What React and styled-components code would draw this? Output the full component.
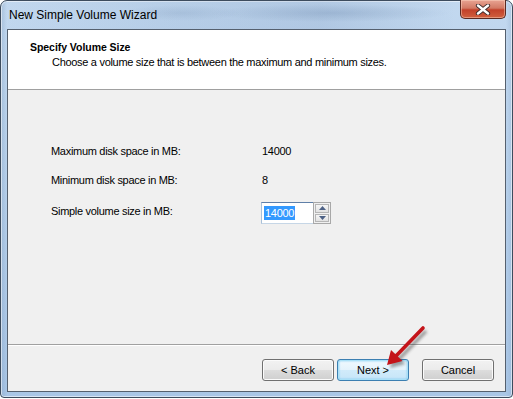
import styled, { createGlobalStyle } from 'styled-components'

const GlobalStyle = createGlobalStyle`
    html, body {
        margin: 0;
        padding: 0;
        background: #ffffff;
    }
    body {
        font-family: 'Liberation Sans', Arial, sans-serif;
        font-size: 11px;
        letter-spacing: -0.3px;
        color: #000;
    }
`

const rows = [
    { label: 'Maximum disk space in MB:', value: '14000' },
    { label: 'Minimum disk space in MB:', value: '8' },
]

export default function App() {
    return (
        <>
            <GlobalStyle />
            <Window>
                <TitleBar>
                    <Caption>New Simple Volume Wizard</Caption>
                    <CloseButton>
                        <svg width="18" height="11" viewBox="0 0 18 11">
                            <path d="M4 1.5 L14 9.5 M14 1.5 L4 9.5" stroke="#3b2a2a" strokeWidth="4.2" strokeLinecap="round" />
                            <path d="M4 1.5 L14 9.5 M14 1.5 L4 9.5" stroke="#ffffff" strokeWidth="2.4" strokeLinecap="round" />
                        </svg>
                    </CloseButton>
                </TitleBar>
                <Client>
                    <Header>
                        <Heading>Specify Volume Size</Heading>
                        <SubHeading>Choose a volume size that is between the maximum and minimum sizes.</SubHeading>
                    </Header>
                    <Body>
                        <Form>
                            {rows.map((row) => (
                                <Row key={row.label}>
                                    <Label>{row.label}</Label>
                                    <Value>{row.value}</Value>
                                </Row>
                            ))}
                            <Row>
                                <Label>Simple volume size in MB:</Label>
                                <Spin>
                                    <SpinField>
                                        <Selected>14000</Selected>
                                    </SpinField>
                                    <SpinButtons>
                                        <SpinButton>
                                            <svg width="7" height="4" viewBox="0 0 7 4"><path d="M0 4 L3.5 0 L7 4 Z" fill="#4d6185" /></svg>
                                        </SpinButton>
                                        <SpinButton>
                                            <svg width="7" height="4" viewBox="0 0 7 4"><path d="M0 0 L3.5 4 L7 0 Z" fill="#4d6185" /></svg>
                                        </SpinButton>
                                    </SpinButtons>
                                </Spin>
                            </Row>
                        </Form>
                    </Body>
                    <Footer>
                        <NavGroup>
                            <Button>&lt; Back</Button>
                            <Button primary>Next &gt;</Button>
                        </NavGroup>
                        <Button>Cancel</Button>
                    </Footer>
                </Client>
                <Arrow width="60" height="60" viewBox="0 0 60 60">
                    <defs>
                        <filter id="sh" x="-30%" y="-30%" width="160%" height="160%">
                            <feGaussianBlur stdDeviation="1.6" />
                        </filter>
                    </defs>
                    <g transform="translate(3 3)" opacity="0.45" filter="url(#sh)">
                        <path d="M46 4 L18 33" stroke="#333" strokeWidth="3.6" />
                        <path d="M10 41 L14 26 L25.5 37 Z" fill="#333" />
                    </g>
                    <path d="M46 4 L18 33" stroke="#c4141a" strokeWidth="3.6" strokeLinecap="round" />
                    <path d="M10 41 L14 26 L25.5 37 Z" fill="#c4141a" />
                </Arrow>
            </Window>
        </>
    )
}

const Window = styled.div`
    position: relative;
    box-sizing: border-box;
    width: 513px;
    height: 398px;
    display: flex;
    flex-direction: column;
    border: 1px solid #3d4c5e;
    border-radius: 7px 7px 4px 4px;
    background:
        linear-gradient(90deg, rgba(120,150,185,0.35) 0, rgba(255,255,255,0) 6px, rgba(255,255,255,0) 505px, rgba(120,150,185,0.25) 511px),
        linear-gradient(180deg, #c2d8ef 0%, #b9d2ec 40%, #a9c6e6 100%);
    box-shadow: inset 0 0 0 1px rgba(255,255,255,0.55);
`

const TitleBar = styled.div`
    height: 28px;
    display: flex;
    align-items: flex-start;
    justify-content: space-between;
    padding-left: 8px;
    background:
        radial-gradient(ellipse 120px 9px at 330px 12px, rgba(80,110,150,0.22), rgba(255,255,255,0)),
        radial-gradient(ellipse 60px 8px at 180px 12px, rgba(80,110,150,0.15), rgba(255,255,255,0)),
        linear-gradient(90deg, rgba(255,255,255,0) 0, rgba(110,140,180,0.12) 160px, rgba(90,120,165,0.16) 320px, rgba(255,255,255,0) 455px);
`

const Caption = styled.div`
    font-family: 'Liberation Sans', Arial, sans-serif;
    font-size: 12px;
    letter-spacing: 0;
    line-height: 14px;
    padding-top: 7px;
    color: #000;
`

const CloseButton = styled.div`
    width: 44px;
    height: 18px;
    margin-right: 6px;
    margin-top: -1px;
    display: flex;
    align-items: center;
    justify-content: center;
    border: 1px solid #5a2a22;
    border-top: none;
    border-radius: 0 0 5px 5px;
    background: linear-gradient(180deg, #e8a493 0%, #d27a65 45%, #c2412a 55%, #d0603f 100%);
    box-shadow: inset 0 0 0 1px rgba(255,220,200,0.45);
`

const Client = styled.div`
    flex: 1;
    display: flex;
    flex-direction: column;
    margin: 0 6px 5px 6px;
    border: 1px solid #55606e;
    background: #f0f0f0;
`

const Header = styled.div`
    height: 60px;
    box-sizing: border-box;
    padding: 11px 0 0 22px;
    background: #ffffff;
    border-bottom: 1px solid #a0a0a0;
`

const Heading = styled.div`
    font-weight: bold;
    font-size: 10.5px;
    letter-spacing: -0.05px;
    line-height: 13px;
`

const SubHeading = styled.div`
    font-size: 11px;
    line-height: 13px;
    margin: 2px 0 0 22px;
`

const Body = styled.div`
    flex: 1;
    padding: 50px 0 0 43px;
`

const Form = styled.div`
    display: flex;
    flex-direction: column;
    gap: 7px;
`

const Row = styled.div`
    display: grid;
    grid-template-columns: 210px auto;
    align-items: center;
    height: 22px;
`

const Label = styled.div`
    line-height: 13px;
`

const Value = styled.div`
    padding-left: 1px;
    line-height: 13px;
`

const Spin = styled.div`
    display: flex;
    width: 70px;
    height: 22px;
    margin-top: 4px;
`

const SpinField = styled.div`
    flex: 1;
    box-sizing: border-box;
    display: flex;
    align-items: center;
    padding-left: 2px;
    background: #ffffff;
    border: 1px solid;
    border-color: #5f7fa8 #b5cbe0 #c6d6e6 #a9c0d8;
    border-right: none;
`

const Selected = styled.span`
    background: #3399ff;
    color: #ffffff;
    line-height: 14px;
    padding: 0 1px;
`

const SpinButtons = styled.div`
    width: 18px;
    box-sizing: border-box;
    display: flex;
    flex-direction: column;
    gap: 1px;
    padding: 1px;
    border: 1px solid #a8a8a8;
    background: #f0f0f0;
`

const SpinButton = styled.div`
    flex: 1;
    display: flex;
    align-items: center;
    justify-content: center;
    border: 1px solid #b6b6b6;
    background: linear-gradient(180deg, #f6f6f6, #e2e2e2);
`

const Footer = styled.div`
    height: 47px;
    box-sizing: border-box;
    display: flex;
    align-items: flex-start;
    justify-content: flex-end;
    gap: 13px;
    padding: 14px 11px 0 0;
    border-top: 1px solid #a0a0a0;
    box-shadow: inset 0 1px 0 #ffffff;
`

const NavGroup = styled.div`
    display: flex;
    gap: 3px;
`

const Button = styled.div`
    width: 72px;
    height: 22px;
    box-sizing: border-box;
    display: flex;
    align-items: center;
    justify-content: center;
    font-size: 11px;
    letter-spacing: 0;
    border-radius: 3px;
    border: 1px solid ${(p) => (p.primary ? '#3c7fb1' : '#707070')};
    background: ${(p) =>
        p.primary
            ? 'linear-gradient(180deg, #f0f9fe 0%, #e4f3fc 50%, #d1ebfa 51%, #c6e5f8 100%)'
            : 'linear-gradient(180deg, #f2f2f2 0%, #ebebeb 50%, #dddddd 51%, #cfcfcf 100%)'};
    box-shadow: ${(p) =>
        p.primary ? 'inset 0 0 0 1px #a9e0f7, inset 0 0 2px 1px #72c6ef' : 'inset 0 0 0 1px #fbfbfb'};
`

const Arrow = styled.svg`
    position: absolute;
    left: 376px;
    top: 323px;
    overflow: visible;
`
